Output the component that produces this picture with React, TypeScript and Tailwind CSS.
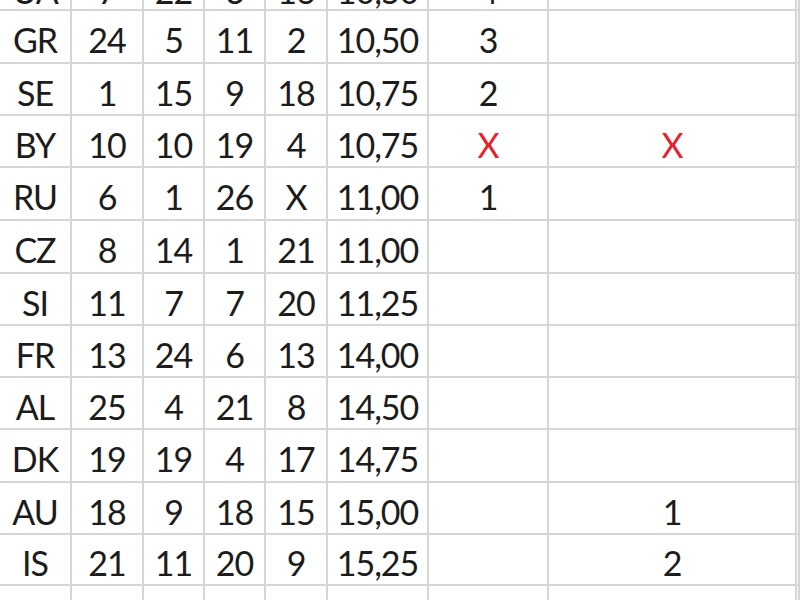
import React from 'react';

type Row = {
  code: string;
  vals: string[];
  avg: string;
  rank: string;
  extra: string;
  h: string;
};

// rows are not all the same height in the zoomed sheet, so keep them per row
const rows: Row[] = [
  { code: 'UA', vals: ['7', '22', '3', '16'], avg: '10,50', rank: '4', extra: '', h: 'h-[53px]' },
  { code: 'GR', vals: ['24', '5', '11', '2'], avg: '10,50', rank: '3', extra: '', h: 'h-[53px]' },
  { code: 'SE', vals: ['1', '15', '9', '18'], avg: '10,75', rank: '2', extra: '', h: 'h-[52px]' },
  { code: 'BY', vals: ['10', '10', '19', '4'], avg: '10,75', rank: 'X', extra: 'X', h: 'h-[52px]' },
  { code: 'RU', vals: ['6', '1', '26', 'X'], avg: '11,00', rank: '1', extra: '', h: 'h-[53px]' },
  { code: 'CZ', vals: ['8', '14', '1', '21'], avg: '11,00', rank: '', extra: '', h: 'h-[53px]' },
  { code: 'SI', vals: ['11', '7', '7', '20'], avg: '11,25', rank: '', extra: '', h: 'h-[52px]' },
  { code: 'FR', vals: ['13', '24', '6', '13'], avg: '14,00', rank: '', extra: '', h: 'h-[52px]' },
  { code: 'AL', vals: ['25', '4', '21', '8'], avg: '14,50', rank: '', extra: '', h: 'h-[52px]' },
  { code: 'DK', vals: ['19', '19', '4', '17'], avg: '14,75', rank: '', extra: '', h: 'h-[53px]' },
  { code: 'AU', vals: ['18', '9', '18', '15'], avg: '15,00', rank: '', extra: '1', h: 'h-[52px]' },
  { code: 'IS', vals: ['21', '11', '20', '9'], avg: '15,25', rank: '', extra: '2', h: 'h-[51px]' },
  { code: '', vals: ['', '', '', ''], avg: '', rank: '', extra: '', h: 'h-[53px]' },
];

const base = 'flex items-center justify-center border-r-2 border-b-2 border-[#d6d6d6]';

const Mark: React.FC<{ value: string }> = ({ value }) => (
  <span className={value === 'X' ? 'text-[#e8202a]' : ''}>{value}</span>
);

export default function App() {
  return (
    <div className="w-[800px] h-[600px] overflow-hidden bg-white">
      <div
        className="-mt-[42px] text-[34px] leading-none tracking-[-1px] text-[#1c1c1c]"
        style={{ fontFamily: 'Lato, "Open Sans", sans-serif' }}
      >
        {rows.map((r, i) => {
          // the cut-off first row sits a little lower in its cell
          const cell = `${base} ${i === 0 ? 'pt-[15px]' : 'pt-[7px]'}`;
          return (
            <div
              key={i}
              className={`grid grid-cols-[72px_72px_61px_61px_62px_101px_120px_248px_1fr] ${r.h}`}
            >
              <div className={cell}>{r.code}</div>
              {r.vals.map((v, j) => (
                <div key={j} className={cell}>
                  {v}
                </div>
              ))}
              <div className={cell}>{r.avg}</div>
              <div className={cell}>
                <Mark value={r.rank} />
              </div>
              <div className={cell}>
                <Mark value={r.extra} />
              </div>
              <div className={cell} />
            </div>
          );
        })}
      </div>
    </div>
  );
}
